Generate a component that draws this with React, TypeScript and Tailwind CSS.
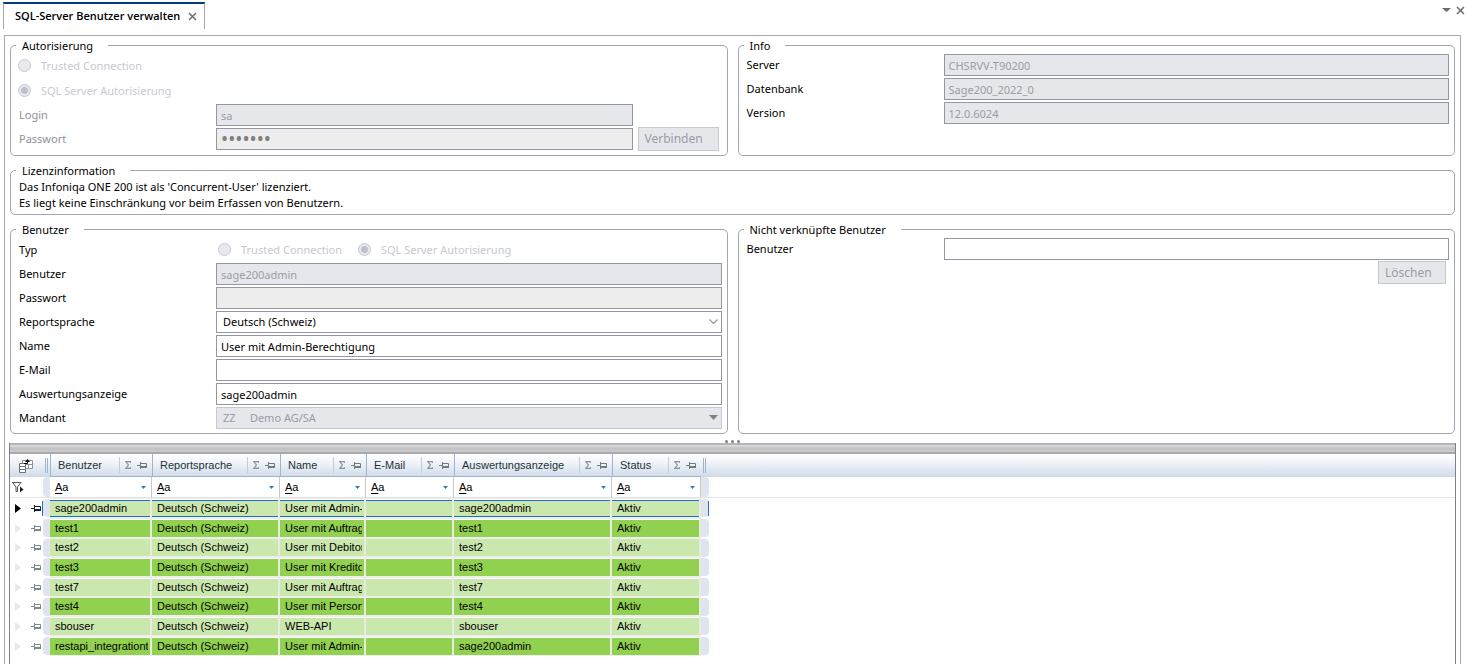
import type { ReactNode } from 'react';

interface UserRow {
  user: string;
  language: string;
  name: string;
  email: string;
  display: string;
  status: string;
}

const users: UserRow[] = [
  { user: 'sage200admin', language: 'Deutsch (Schweiz)', name: 'User mit Admin-Berechtigung', email: '', display: 'sage200admin', status: 'Aktiv' },
  { user: 'test1', language: 'Deutsch (Schweiz)', name: 'User mit Auftrag', email: '', display: 'test1', status: 'Aktiv' },
  { user: 'test2', language: 'Deutsch (Schweiz)', name: 'User mit Debitoren', email: '', display: 'test2', status: 'Aktiv' },
  { user: 'test3', language: 'Deutsch (Schweiz)', name: 'User mit Kreditoren', email: '', display: 'test3', status: 'Aktiv' },
  { user: 'test7', language: 'Deutsch (Schweiz)', name: 'User mit Auftrag', email: '', display: 'test7', status: 'Aktiv' },
  { user: 'test4', language: 'Deutsch (Schweiz)', name: 'User mit Personal', email: '', display: 'test4', status: 'Aktiv' },
  { user: 'sbouser', language: 'Deutsch (Schweiz)', name: 'WEB-API', email: '', display: 'sbouser', status: 'Aktiv' },
  { user: 'restapi_integrationtest', language: 'Deutsch (Schweiz)', name: 'User mit Admin-Berechtigung', email: '', display: 'sage200admin', status: 'Aktiv' },
];

const columns: { key: keyof UserRow; title: string }[] = [
  { key: 'user', title: 'Benutzer' },
  { key: 'language', title: 'Reportsprache' },
  { key: 'name', title: 'Name' },
  { key: 'email', title: 'E-Mail' },
  { key: 'display', title: 'Auswertungsanzeige' },
  { key: 'status', title: 'Status' },
];

const inputBase = 'block h-[22px] w-full min-w-0 rounded-none border px-1 outline-none';
const inputNormal = `${inputBase} border-[#9496a5] bg-white text-black`;
const inputDisabled = `${inputBase} border-[#9496a5] bg-[#e5e7eb] text-[#9a9ca8]`;
const inputPassword = `${inputBase} border-[#9496a5] bg-[#ededed] text-[19px] text-[#808080]`;

function Group({ title, children }: { title: string; children?: ReactNode }) {
  return (
    <fieldset className="min-w-0 rounded-[5px] border border-[#a3a5b2] pr-[5px] pb-[3px] pl-2">
      <legend className="-ml-[3px] h-[15px] bg-white pr-[15px] pl-[6px] leading-4">{title}</legend>
      {children}
    </fieldset>
  );
}

function Row({ id, label, muted, children }: { id: string; label: string; muted?: boolean; children: ReactNode }) {
  return (
    <div className="flex h-6 items-center">
      <label htmlFor={id} className={`w-[197px] shrink-0 ${muted ? 'text-[#8e909c]' : ''}`}>{label}</label>
      <div className="min-w-0 flex-1">{children}</div>
    </div>
  );
}

function Radio({ name, label, checked }: { name: string; label: string; checked?: boolean }) {
  return (
    <label className="flex items-center gap-[10px] text-[#c6c8d2]">
      <input
        type="radio"
        name={name}
        defaultChecked={checked}
        disabled
        className="size-[13px] shrink-0 appearance-none rounded-full border border-[#c6c8d2] bg-[#e8e9ed] checked:bg-[radial-gradient(circle,#bdbfca_0_3px,#e8e9ed_4px)]"
      />
      {label}
    </label>
  );
}

function CloseIcon() {
  return (
    <svg width="9" height="9" viewBox="0 0 9 9" fill="none" stroke="#6b6b6b" strokeWidth="1.5">
      <path d="M1 1l7 7M8 1l-7 7" />
    </svg>
  );
}

function PinIcon({ color }: { color: string }) {
  return (
    <svg width="10" height="7" viewBox="0 0 10 7" fill="none" stroke={color}>
      <path d="M0 3.5h3M3.5 0v7M4 1.5h5.5v4M4 4.5h5.5M4 5.5h6" />
    </svg>
  );
}

function SigmaIcon() {
  return (
    <svg width="6" height="8" viewBox="0 0 6 8" fill="none" stroke="#84949c" strokeWidth="1.2">
      <path d="M5.4 1.8V.6H.8L3.4 4 .8 7.4h4.6V6.2" />
    </svg>
  );
}

function FieldChooserIcon() {
  return (
    <svg width="15" height="14" viewBox="0 0 15 14" fill="none">
      <path d="M3.5 1.5h10v8h-10z" fill="#fff" stroke="#8a9298" />
      <path d="M7 5.5h6M9.5 6v3" stroke="#8a9298" />
      <path d="M.5 4.5h6v9h-6z" fill="#fff" stroke="#6b747a" />
      <path d="M1 7.5h5M1 10.5h5" stroke="#6b747a" />
      <path d="M5 4.500h3.500V2" stroke="#000" />
      <path d="M8.500 0L6 3h5z" fill="#000" />
    </svg>
  );
}

function FilterIcon() {
  return (
    <svg width="12" height="11" viewBox="0 0 12 11" fill="none" stroke="#50585e">
      <path d="M0 .5h9.500M1 1l3 4v4.500h1.500V5l3-4" />
      <path d="M8 4.500v6l3.500-3z" fill="#222" stroke="none" />
    </svg>
  );
}

function HeaderCell({ title }: { title: string }) {
  return (
    <th className="border-b border-[#9db6d0] p-0 font-normal">
      <div className="flex h-[22px] items-center border-l border-[#9db6d0] pl-[7px]">
        <span className="flex-1 text-left text-[#1c3438]">{title}</span>
        <span className="flex h-4 items-center gap-[6px] border-l border-[#c3ccd8] px-[5px]">
          <SigmaIcon />
          <PinIcon color="#6c7c84" />
        </span>
      </div>
    </th>
  );
}

function FilterCell({ title }: { title: string }) {
  return (
    <td className="h-[21px] border-r border-b border-r-[#c9c9c9] border-b-[#e2e4ec] p-0">
      <button aria-label={`Filter ${title}`} className="flex h-5 w-full items-center justify-between px-[5px]">
        <span><span className="underline underline-offset-2">A</span>a</span>
        <svg width="5" height="3" viewBox="0 0 5 3"><path d="M0 0h5L2.5 3z" fill="#3f74b5" /></svg>
      </button>
    </td>
  );
}

function DataRow({ row, index }: { row: UserRow; index: number }) {
  const active = index === 0;
  const fill = index % 2 === 0 ? 'bg-[#cae8ad]' : 'bg-[#92d050]';

  return (
    <tr className={index % 3 === 2 ? 'h-[19px]' : 'h-5'}>
      <td className="p-0">
        <div className="flex h-[17px] items-center pl-[5px]">
          <svg width="6" height="9" viewBox="0 0 6 9"><path d="M0 0v9l6-4.5z" fill={active ? '#000' : '#e8e8e8'} /></svg>
          <span className="ml-[10px] flex-1"><PinIcon color={active ? '#112233' : '#7b8b8b'} /></span>
          <span className={`h-[15px] w-px ${active ? 'bg-[#1f6fe0]' : ''}`} />
          <span className="h-[18px] w-[7px] rounded-l-sm bg-[#e0e4ec]" />
        </div>
      </td>
      {columns.map(col => (
        <td key={col.key} className="border-y border-r-2 border-y-[#eeeeee] border-r-[#e6ecdf] p-0">
          <div className={`h-[17px] overflow-hidden pr-[2px] pl-[5px] ${fill} ${active ? 'border-y border-[#1f6fd0] leading-[15px]' : 'leading-[17px]'}`}>
            <div className="overflow-hidden whitespace-nowrap">{row[col.key] || '\u00a0'}</div>
          </div>
        </td>
      ))}
      <td className="p-0">
        <div className="flex h-[18px] items-center rounded-r-sm bg-[#e0e4ec]">
          <span className={`ml-auto h-[15px] w-px ${active ? 'bg-[#1f6fe0]' : ''}`} />
        </div>
      </td>
      <td className="p-0" />
    </tr>
  );
}

export default function App() {
  return (
    <div className="flex min-h-screen flex-col bg-white font-['Noto_Sans','Open_Sans',sans-serif] text-[11px] leading-4 text-black">
      <header className="flex items-start justify-between pt-[2px] pr-px pl-[3px]">
        <div className="flex h-[27px] items-center gap-2 border-x border-t-2 border-x-[#a8a8ac] border-t-[#003c7d] pr-[7px] pb-px pl-[11px]">
          <span className="font-['Open_Sans',sans-serif] font-semibold">SQL-Server Benutzer verwalten</span>
          <button aria-label="Schliessen"><CloseIcon /></button>
        </div>
        <div className="flex h-4 items-center gap-[5px]">
          <button aria-label="Fensterliste">
            <svg width="9" height="4" viewBox="0 0 9 4"><path d="M0 0h9L4.5 4z" fill="#6b6b6b" /></svg>
          </button>
          <button aria-label="Fenster schliessen"><CloseIcon /></button>
        </div>
      </header>

      <main className="mt-[6px] mr-[5px] ml-1 flex flex-1 flex-col border-x border-t border-[#a9a9ad] px-1 pt-[2px]">
        <div className="flex flex-col gap-[7px] px-px">
          <div className="grid grid-cols-2 gap-[10px]">
            <Group title="Autorisierung">
              <div className="-ml-px">
                <div className="flex h-[25px] items-center"><Radio name="auth" label="Trusted Connection" /></div>
                <div className="flex h-[25px] items-center"><Radio name="auth" label="SQL Server Autorisierung" checked /></div>
              </div>
              <Row id="login" label="Login" muted>
                <div className="pr-[89px]"><input id="login" disabled defaultValue="sa" className={inputDisabled} /></div>
              </Row>
              <div className="pb-px">
                <Row id="login-password" label="Passwort" muted>
                  <div className="flex items-center gap-[5px] pr-[3px]">
                    <input id="login-password" type="password" disabled defaultValue="1234567" className={inputPassword} />
                    <button disabled className="h-6 w-[81px] shrink-0 border border-[#c6c8d2] bg-[#e5e7eb] pl-[6px] text-left text-[12px] text-[#9a9ca8]">Verbinden</button>
                  </div>
                </Row>
              </div>
            </Group>
            <Group title="Info">
              <Row id="server" label="Server"><input id="server" disabled defaultValue="CHSRVV-T90200" className={inputDisabled} /></Row>
              <Row id="database" label="Datenbank"><input id="database" disabled defaultValue="Sage200_2022_0" className={inputDisabled} /></Row>
              <Row id="version" label="Version"><input id="version" disabled defaultValue="12.0.6024" className={inputDisabled} /></Row>
            </Group>
          </div>

          <Group title="Lizenzinformation">
            <p className="pt-px">Das Infoniqa ONE 200 ist als 'Concurrent-User' lizenziert.</p>
            <p>Es liegt keine Einschränkung vor beim Erfassen von Benutzern.</p>
          </Group>

          <div className="grid grid-cols-2 gap-[10px]">
            <Group title="Benutzer">
              <div className="flex h-[25px] items-center">
                <span className="w-[199px] shrink-0">Typ</span>
                <div className="flex gap-4">
                  <Radio name="type" label="Trusted Connection" />
                  <Radio name="type" label="SQL Server Autorisierung" checked />
                </div>
              </div>
              <Row id="user" label="Benutzer"><input id="user" disabled defaultValue="sage200admin" className={inputDisabled} /></Row>
              <Row id="password" label="Passwort"><input id="password" type="password" disabled className={inputPassword} /></Row>
              <Row id="language" label="Reportsprache">
                <div className="relative">
                  <select id="language" className={`${inputNormal} appearance-none pl-[6px]`}>
                    <option>Deutsch (Schweiz)</option>
                  </select>
                  <svg className="pointer-events-none absolute top-2 right-1" width="9" height="6" viewBox="0 0 9 6" fill="none" stroke="#9496a5" strokeWidth="1.2">
                    <path d="M.5.5l4 4 4-4" />
                  </svg>
                </div>
              </Row>
              <Row id="name" label="Name"><input id="name" defaultValue="User mit Admin-Berechtigung" className={inputNormal} /></Row>
              <Row id="email" label="E-Mail"><input id="email" className={inputNormal} /></Row>
              <Row id="display" label="Auswertungsanzeige"><input id="display" defaultValue="sage200admin" className={inputNormal} /></Row>
              <Row id="client" label="Mandant">
                <div className="relative">
                  <select id="client" disabled className={`${inputBase} appearance-none border-[#c6c8d2] bg-[#e5e7eb] pl-[6px] text-[#9a9ca8] opacity-100`}>
                    <option>{'ZZ\u00a0\u00a0\u00a0\u00a0\u00a0Demo AG/SA'}</option>
                  </select>
                  <svg className="pointer-events-none absolute top-2 right-1" width="9" height="5" viewBox="0 0 9 5"><path d="M0 0h9L4.5 5z" fill="#808080" /></svg>
                </div>
              </Row>
            </Group>
            <Group title="Nicht verknüpfte Benutzer">
              <Row id="unlinked" label="Benutzer"><input id="unlinked" className={inputNormal} /></Row>
              <div className="flex justify-end pr-[3px]">
                <button disabled className="h-[23px] w-[68px] border border-[#c6c8d2] bg-[#e5e7eb] pl-[6px] text-left text-[12px] text-[#9a9ca8]">Löschen</button>
              </div>
            </Group>
          </div>
        </div>

        <div className="flex h-[9px] items-end justify-center gap-[3px]">
          <span className="size-[3px] rounded-full bg-[#808080]" />
          <span className="size-[3px] rounded-full bg-[#808080]" />
          <span className="size-[3px] rounded-full bg-[#808080]" />
        </div>

        <section className="flex-1 border-x border-[#808085] font-['Liberation_Sans',Arial,sans-serif]">
          <div className="h-[11px] border-t-2 border-b-2 border-t-[#b4b4b8] border-b-[#a9a9ad] bg-linear-to-b from-[#dedede] via-[#c2c2c2] to-[#cccccc]" />
          <table className="w-full table-fixed border-separate border-spacing-0">
            <colgroup>
              <col className="w-10" />
              <col className="w-[102px]" />
              <col className="w-[128px]" />
              <col className="w-[86px]" />
              <col className="w-[88px]" />
              <col className="w-[158px]" />
              <col className="w-[89px]" />
              <col className="w-2" />
              <col />
            </colgroup>
            <thead>
              <tr className="bg-linear-to-b from-white via-[#eaeff6] to-[#d0dae8]">
                <th className="p-0">
                  <div className="flex h-[23px] items-center pl-[9px]">
                    <FieldChooserIcon />
                    <span className="ml-[11px] h-[15px] w-[3px] border-x border-[#9db6d0]" />
                  </div>
                </th>
                {columns.map(col => <HeaderCell key={col.key} title={col.title} />)}
                <th className="p-0"><div className="ml-[2px] h-[15px] w-[3px] border-x border-[#9db6d0]" /></th>
                <th className="p-0" />
              </tr>
            </thead>
            <tbody>
              <tr>
                <td className="border-b border-[#e2e4ec] p-0">
                  <div className="flex h-5 items-center justify-between pl-[2px]">
                    <FilterIcon />
                    <span className="h-5 w-[7px] rounded-l-sm bg-[#e0e4ec]" />
                  </div>
                </td>
                {columns.map(col => <FilterCell key={col.key} title={col.title} />)}
                <td className="border-b border-[#e2e4ec] p-0"><div className="h-5 rounded-r-sm bg-[#e0e4ec]" /></td>
                <td className="border-b border-[#e2e4ec] p-0" />
              </tr>
              {users.map((row, i) => <DataRow key={row.user} row={row} index={i} />)}
            </tbody>
          </table>
        </section>
      </main>
    </div>
  );
}
